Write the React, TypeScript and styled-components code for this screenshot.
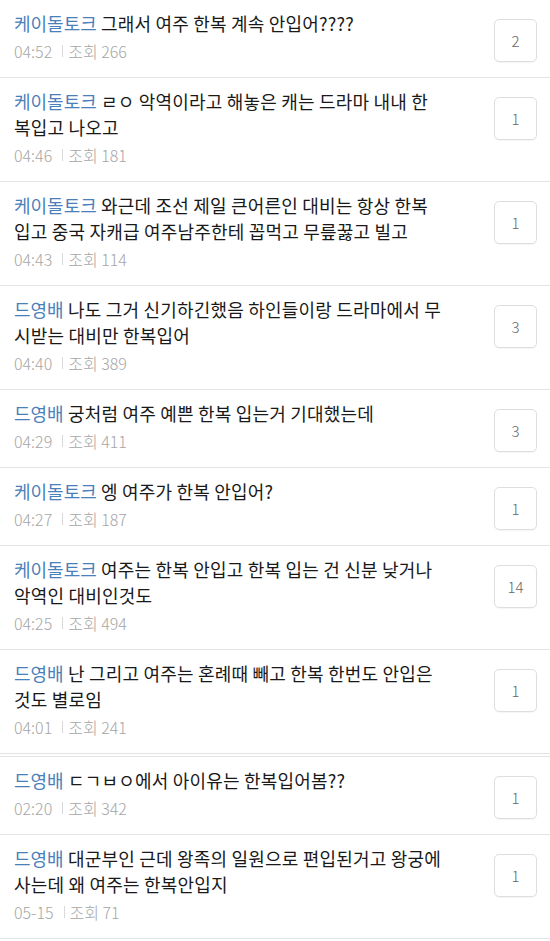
import * as React from "react";
import styled, { createGlobalStyle } from "styled-components";

const GlobalStyle = createGlobalStyle`
    html, body {
        margin: 0;
        padding: 0;
        background: #ffffff;
    }
    body {
        font-family: "Noto Sans CJK KR", "Noto Sans", sans-serif;
        -webkit-font-smoothing: antialiased;
    }
`;

interface Comment {
    author: string;
    lines: string[];
    time: string;
    views: number;
    replies: number;
    divider?: boolean;
}

// lines are kept as the app wraps them (it breaks inside words)
const comments: Comment[] = [
    { author: "케이돌토크", lines: ["그래서 여주 한복 계속 안입어????"], time: "04:52", views: 266, replies: 2 },
    { author: "케이돌토크", lines: ["ㄹㅇ 악역이라고 해놓은 캐는 드라마 내내 한", "복입고 나오고"], time: "04:46", views: 181, replies: 1 },
    { author: "케이돌토크", lines: ["와근데 조선 제일 큰어른인 대비는 항상 한복", "입고 중국 자캐급 여주남주한테 꼽먹고 무릎꿇고 빌고"], time: "04:43", views: 114, replies: 1 },
    { author: "드영배", lines: ["나도 그거 신기하긴했음 하인들이랑 드라마에서 무", "시받는 대비만 한복입어"], time: "04:40", views: 389, replies: 3 },
    { author: "드영배", lines: ["궁처럼 여주 예쁜 한복 입는거 기대했는데"], time: "04:29", views: 411, replies: 3 },
    { author: "케이돌토크", lines: ["엥 여주가 한복 안입어?"], time: "04:27", views: 187, replies: 1 },
    { author: "케이돌토크", lines: ["여주는 한복 안입고 한복 입는 건 신분 낮거나", "악역인 대비인것도"], time: "04:25", views: 494, replies: 14 },
    { author: "드영배", lines: ["난 그리고 여주는 혼례때 빼고 한복 한번도 안입은", "것도 별로임"], time: "04:01", views: 241, replies: 1, divider: true },
    { author: "드영배", lines: ["ㄷㄱㅂㅇ에서 아이유는 한복입어봄??"], time: "02:20", views: 342, replies: 1 },
    { author: "드영배", lines: ["대군부인 근데 왕족의 일원으로 편입된거고 왕궁에", "사는데 왜 여주는 한복안입지"], time: "05-15", views: 71, replies: 1 },
];

const List = styled.ul`
    list-style: none;
    margin: 0;
    padding: 0;
`;

const Row = styled.li<{ $divider?: boolean }>`
    display: flex;
    align-items: flex-start;
    gap: 2px;
    padding: 10px 13px 15px 14px;
    border-bottom: ${p => p.$divider ? "4px double #e4e4e4" : "1px solid #e4e4e4"};
`;

const Body = styled.div`
    flex: 1;
    min-width: 0;
`;

const Title = styled.p`
    margin: 0;
    font-size: 18px;
    line-height: 26px;
    letter-spacing: 0.2px;
    color: #191919;
    white-space: nowrap;
`;

const Author = styled.span`
    color: #4a80b9;
    letter-spacing: 0;
`;

const Meta = styled.div`
    display: flex;
    align-items: center;
    margin-top: 4px;
    font-size: 16px;
    line-height: 22px;
    color: #a6a6a6;
    font-weight: 300;
`;

const Bar = styled.span`
    width: 1px;
    height: 12px;
    background: #d8d8d8;
    margin: 0 5px 0 10px;
`;

const ReplyBox = styled.div`
    flex: 0 0 auto;
    width: 41px;
    height: 41px;
    margin-top: 9px;
    display: flex;
    align-items: center;
    justify-content: center;
    border: 1px solid #dedede;
    border-radius: 5px;
    font-size: 15px;
    font-weight: 300;
    color: #666666;
    box-shadow: 0 1px 1px rgba(0, 0, 0, 0.04);
`;

export default function App() {
    return <>
        <GlobalStyle />
        <List>
            {comments.map((c, i) => <Row key={i} $divider={c.divider}>
                <Body>
                    <Title>
                        <Author>{c.author}</Author>{" "}
                        {c.lines.map((l, j) => <React.Fragment key={j}>{j > 0 && <br />}{l}</React.Fragment>)}
                    </Title>
                    <Meta>{c.time}<Bar />조회 {c.views}</Meta>
                </Body>
                <ReplyBox>{c.replies}</ReplyBox>
            </Row>)}
        </List>
    </>;
}
